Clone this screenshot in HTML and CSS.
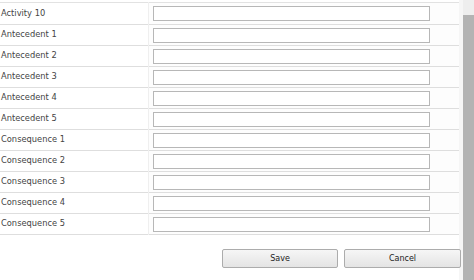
FILE: index.html
```html
<!DOCTYPE html>
<html>
<head>
<meta charset="utf-8">
<link rel="stylesheet" href="styles.css">
</head>
<body>
<div class="page">
  <div class="main">
    <table class="form">
      <tr><td class="label">Activity 10</td><td class="field"><input type="text"></td></tr>
      <tr><td class="label">Antecedent 1</td><td class="field"><input type="text"></td></tr>
      <tr><td class="label">Antecedent 2</td><td class="field"><input type="text"></td></tr>
      <tr><td class="label">Antecedent 3</td><td class="field"><input type="text"></td></tr>
      <tr><td class="label">Antecedent 4</td><td class="field"><input type="text"></td></tr>
      <tr><td class="label">Antecedent 5</td><td class="field"><input type="text"></td></tr>
      <tr><td class="label">Consequence 1</td><td class="field"><input type="text"></td></tr>
      <tr><td class="label">Consequence 2</td><td class="field"><input type="text"></td></tr>
      <tr><td class="label">Consequence 3</td><td class="field"><input type="text"></td></tr>
      <tr><td class="label">Consequence 4</td><td class="field"><input type="text"></td></tr>
      <tr><td class="label">Consequence 5</td><td class="field"><input type="text"></td></tr>
    </table>
    <div class="actions">
      <button class="btn btn-save" type="button">Save</button>
      <button class="btn btn-cancel" type="button">Cancel</button>
    </div>
  </div>
  <div class="scrollbar"><div class="thumb"></div></div>
</div>
</body>
</html>
```
FILE: styles.css
```css
html, body {
  margin: 0;
  padding: 0;
  background: #ffffff;
}
.page {
  display: flex;
  width: 474px;
  height: 280px;
  overflow: hidden;
  font-family: "DejaVu Sans", Verdana, sans-serif;
  font-size: 8.3px;
  color: #444444;
}
.main {
  flex: none;
  width: 463px;
  background: linear-gradient(to right, #ffffff 459px, #f6f6f6 459px);
}
.form {
  width: 459px;
  margin-top: 2px;
  border-collapse: collapse;
  border-top: 1px solid #e2e2e2;
}
.form tr {
  border-bottom: 1px solid #dedede;
}
.form td {
  box-sizing: border-box;
  height: 21px;
  padding: 0;
  vertical-align: middle;
}
.form tr:first-child td {
  height: 22px;
}
.label {
  width: 148px;
  padding: 0 0 2px 1px !important;
  border-right: 1px solid #efefef;
  white-space: nowrap;
  line-height: 10px;
}
.field {
  padding-left: 4px !important;
  background: #fdfdfd;
}
.field input {
  display: block;
  box-sizing: border-box;
  width: 277px;
  height: 15px;
  margin: 0;
  padding: 0;
  border: 1px solid #b7b7b7;
  background: #ffffff;
  outline: none;
}
.actions {
  display: flex;
  justify-content: flex-end;
  gap: 6px;
  padding-top: 14px;
  padding-right: 2px;
}
.btn {
  flex: none;
  box-sizing: border-box;
  height: 19px;
  margin: 0;
  padding: 0;
  border: 1px solid #acacac;
  border-radius: 2px;
  background: linear-gradient(#f6f6f6, #e4e4e4);
  font-family: "DejaVu Sans", Verdana, sans-serif;
  font-size: 8px;
  color: #222222;
}
.btn-save {
  width: 116px;
}
.btn-cancel {
  width: 117px;
}
.scrollbar {
  flex: none;
  width: 11px;
  height: 280px;
  background: #eeeeee;
  padding-top: 15px;
  box-sizing: border-box;
}
.thumb {
  height: 100%;
  background: #b3b3b3;
}
```
